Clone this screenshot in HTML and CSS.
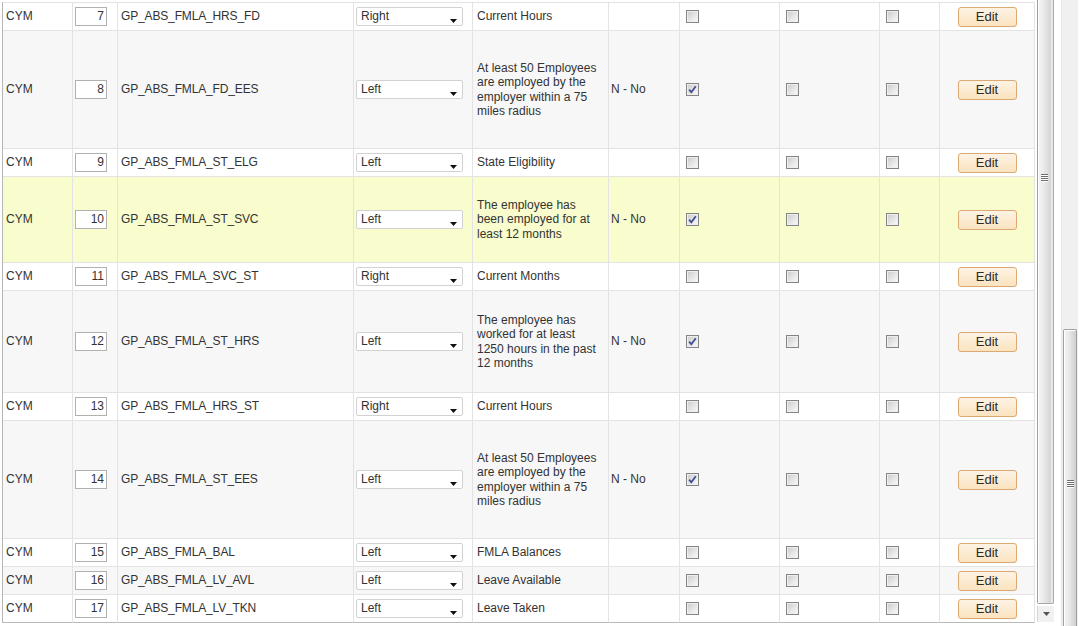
FILE: index.html
```html
<!DOCTYPE html>
<html>
<head>
<meta charset="utf-8">
<title>FMLA Grid</title>
<link rel="stylesheet" href="styles.css">
</head>
<body>
<div class="frame">
  <div class="grid-area">
    <div class="grid">
      <div class="row h28 bg-white">
        <div class="c c1">CYM</div>
        <div class="c c2"><span class="num">7</span></div>
        <div class="c c3">GP_ABS_FMLA_HRS_FD</div>
        <div class="c c4"><span class="sel">Right<svg class="arr" width="7" height="4" viewBox="0 0 7 4"><path d="M0 0H7L3.5 4Z" fill="#111"/></svg></span></div>
        <div class="c c5">Current Hours</div>
        <div class="c c6"></div>
        <div class="c c7"><span class="cb"></span></div>
        <div class="c c8"><span class="cb"></span></div>
        <div class="c c9"><span class="cb"></span></div>
        <div class="c c10"><span class="btn">Edit</span></div>
      </div>
      <div class="row h118 bg-gray">
        <div class="c c1">CYM</div>
        <div class="c c2"><span class="num">8</span></div>
        <div class="c c3">GP_ABS_FMLA_FD_EES</div>
        <div class="c c4"><span class="sel">Left<svg class="arr" width="7" height="4" viewBox="0 0 7 4"><path d="M0 0H7L3.5 4Z" fill="#111"/></svg></span></div>
        <div class="c c5">At least 50 Employees are employed by the employer within a 75 miles radius</div>
        <div class="c c6">N - No</div>
        <div class="c c7"><span class="cb on"><svg width="11" height="11" viewBox="0 0 11 11"><path d="M2.2 5.6L4.3 8.3L8.8 2.2" fill="none" stroke="#3f4f93" stroke-width="1.8"/></svg></span></div>
        <div class="c c8"><span class="cb"></span></div>
        <div class="c c9"><span class="cb"></span></div>
        <div class="c c10"><span class="btn">Edit</span></div>
      </div>
      <div class="row h28 bg-white">
        <div class="c c1">CYM</div>
        <div class="c c2"><span class="num">9</span></div>
        <div class="c c3">GP_ABS_FMLA_ST_ELG</div>
        <div class="c c4"><span class="sel">Left<svg class="arr" width="7" height="4" viewBox="0 0 7 4"><path d="M0 0H7L3.5 4Z" fill="#111"/></svg></span></div>
        <div class="c c5">State Eligibility</div>
        <div class="c c6"></div>
        <div class="c c7"><span class="cb"></span></div>
        <div class="c c8"><span class="cb"></span></div>
        <div class="c c9"><span class="cb"></span></div>
        <div class="c c10"><span class="btn">Edit</span></div>
      </div>
      <div class="row h86 bg-yellow">
        <div class="c c1">CYM</div>
        <div class="c c2"><span class="num">10</span></div>
        <div class="c c3">GP_ABS_FMLA_ST_SVC</div>
        <div class="c c4"><span class="sel">Left<svg class="arr" width="7" height="4" viewBox="0 0 7 4"><path d="M0 0H7L3.5 4Z" fill="#111"/></svg></span></div>
        <div class="c c5">The employee has been employed for at least 12 months</div>
        <div class="c c6">N - No</div>
        <div class="c c7"><span class="cb on"><svg width="11" height="11" viewBox="0 0 11 11"><path d="M2.2 5.6L4.3 8.3L8.8 2.2" fill="none" stroke="#3f4f93" stroke-width="1.8"/></svg></span></div>
        <div class="c c8"><span class="cb"></span></div>
        <div class="c c9"><span class="cb"></span></div>
        <div class="c c10"><span class="btn">Edit</span></div>
      </div>
      <div class="row h28 bg-white">
        <div class="c c1">CYM</div>
        <div class="c c2"><span class="num">11</span></div>
        <div class="c c3">GP_ABS_FMLA_SVC_ST</div>
        <div class="c c4"><span class="sel">Right<svg class="arr" width="7" height="4" viewBox="0 0 7 4"><path d="M0 0H7L3.5 4Z" fill="#111"/></svg></span></div>
        <div class="c c5">Current Months</div>
        <div class="c c6"></div>
        <div class="c c7"><span class="cb"></span></div>
        <div class="c c8"><span class="cb"></span></div>
        <div class="c c9"><span class="cb"></span></div>
        <div class="c c10"><span class="btn">Edit</span></div>
      </div>
      <div class="row h102 bg-gray">
        <div class="c c1">CYM</div>
        <div class="c c2"><span class="num">12</span></div>
        <div class="c c3">GP_ABS_FMLA_ST_HRS</div>
        <div class="c c4"><span class="sel">Left<svg class="arr" width="7" height="4" viewBox="0 0 7 4"><path d="M0 0H7L3.5 4Z" fill="#111"/></svg></span></div>
        <div class="c c5">The employee has worked for at least 1250 hours in the past 12 months</div>
        <div class="c c6">N - No</div>
        <div class="c c7"><span class="cb on"><svg width="11" height="11" viewBox="0 0 11 11"><path d="M2.2 5.6L4.3 8.3L8.8 2.2" fill="none" stroke="#3f4f93" stroke-width="1.8"/></svg></span></div>
        <div class="c c8"><span class="cb"></span></div>
        <div class="c c9"><span class="cb"></span></div>
        <div class="c c10"><span class="btn">Edit</span></div>
      </div>
      <div class="row h28 bg-white">
        <div class="c c1">CYM</div>
        <div class="c c2"><span class="num">13</span></div>
        <div class="c c3">GP_ABS_FMLA_HRS_ST</div>
        <div class="c c4"><span class="sel">Right<svg class="arr" width="7" height="4" viewBox="0 0 7 4"><path d="M0 0H7L3.5 4Z" fill="#111"/></svg></span></div>
        <div class="c c5">Current Hours</div>
        <div class="c c6"></div>
        <div class="c c7"><span class="cb"></span></div>
        <div class="c c8"><span class="cb"></span></div>
        <div class="c c9"><span class="cb"></span></div>
        <div class="c c10"><span class="btn">Edit</span></div>
      </div>
      <div class="row h118 bg-gray">
        <div class="c c1">CYM</div>
        <div class="c c2"><span class="num">14</span></div>
        <div class="c c3">GP_ABS_FMLA_ST_EES</div>
        <div class="c c4"><span class="sel">Left<svg class="arr" width="7" height="4" viewBox="0 0 7 4"><path d="M0 0H7L3.5 4Z" fill="#111"/></svg></span></div>
        <div class="c c5">At least 50 Employees are employed by the employer within a 75 miles radius</div>
        <div class="c c6">N - No</div>
        <div class="c c7"><span class="cb on"><svg width="11" height="11" viewBox="0 0 11 11"><path d="M2.2 5.6L4.3 8.3L8.8 2.2" fill="none" stroke="#3f4f93" stroke-width="1.8"/></svg></span></div>
        <div class="c c8"><span class="cb"></span></div>
        <div class="c c9"><span class="cb"></span></div>
        <div class="c c10"><span class="btn">Edit</span></div>
      </div>
      <div class="row h28 bg-white">
        <div class="c c1">CYM</div>
        <div class="c c2"><span class="num">15</span></div>
        <div class="c c3">GP_ABS_FMLA_BAL</div>
        <div class="c c4"><span class="sel">Left<svg class="arr" width="7" height="4" viewBox="0 0 7 4"><path d="M0 0H7L3.5 4Z" fill="#111"/></svg></span></div>
        <div class="c c5">FMLA Balances</div>
        <div class="c c6"></div>
        <div class="c c7"><span class="cb"></span></div>
        <div class="c c8"><span class="cb"></span></div>
        <div class="c c9"><span class="cb"></span></div>
        <div class="c c10"><span class="btn">Edit</span></div>
      </div>
      <div class="row h28 bg-gray">
        <div class="c c1">CYM</div>
        <div class="c c2"><span class="num">16</span></div>
        <div class="c c3">GP_ABS_FMLA_LV_AVL</div>
        <div class="c c4"><span class="sel">Left<svg class="arr" width="7" height="4" viewBox="0 0 7 4"><path d="M0 0H7L3.5 4Z" fill="#111"/></svg></span></div>
        <div class="c c5">Leave Available</div>
        <div class="c c6"></div>
        <div class="c c7"><span class="cb"></span></div>
        <div class="c c8"><span class="cb"></span></div>
        <div class="c c9"><span class="cb"></span></div>
        <div class="c c10"><span class="btn">Edit</span></div>
      </div>
      <div class="row h28 bg-white last">
        <div class="c c1">CYM</div>
        <div class="c c2"><span class="num">17</span></div>
        <div class="c c3">GP_ABS_FMLA_LV_TKN</div>
        <div class="c c4"><span class="sel">Left<svg class="arr" width="7" height="4" viewBox="0 0 7 4"><path d="M0 0H7L3.5 4Z" fill="#111"/></svg></span></div>
        <div class="c c5">Leave Taken</div>
        <div class="c c6"></div>
        <div class="c c7"><span class="cb"></span></div>
        <div class="c c8"><span class="cb"></span></div>
        <div class="c c9"><span class="cb"></span></div>
        <div class="c c10"><span class="btn">Edit</span></div>
      </div>
    </div>
  </div>
  <div class="sb-inner">
    <div class="sb-inner-thumb">
      <span class="grip grip-inner"><i></i><i></i><i></i><i></i></span>
    </div>
    <div class="sb-inner-down"><svg width="7" height="4" viewBox="0 0 7 4"><path d="M0 0H7L3.5 4Z" fill="#555"/></svg></div>
  </div>
  <div class="sb-gap"></div>
  <div class="sb-outer">
    <div class="sb-outer-track"></div>
    <div class="sb-outer-thumb">
      <span class="grip grip-outer"><i></i><i></i><i></i><i></i></span>
    </div>
  </div>
</div>
</body>
</html>
```

FILE: styles.css
```css
* { box-sizing: border-box; }
html, body { margin: 0; padding: 0; background: #fff; }
body {
  font-family: "Liberation Sans", Arial, sans-serif;
  font-size: 12px;
  color: #333;
  overflow: hidden;
}
.frame {
  display: flex;
  height: 626px;
  width: 1079px;
}
.grid-area {
  width: 1037px;
  padding: 2px 0 0 2px;
  flex: none;
}
.grid {
  width: 1033px;
  border-left: 1px solid #b6b6b6;
  border-top: 1px solid #e3e3e3;
}
.row {
  display: grid;
  grid-template-columns: 70px 45px 236px 119px 136px 71px 100px 100px 60px 95px;
}
.row.last .c { border-bottom-color: #b9b9b9; }
.h28 { height: 28px; }
.h86 { height: 86px; }
.h102 { height: 102px; }
.h118 { height: 118px; }
.bg-white { background: #fff; }
.bg-gray { background: #f7f7f7; }
.bg-yellow { background: #f9fccd; }
.c {
  display: flex;
  align-items: center;
  border-right: 1px solid #e3e3e3;
  border-bottom: 1px solid #e3e3e3;
  padding: 0 3px;
  line-height: 14.4px;
  min-width: 0;
}
.c3 { letter-spacing: -0.15px; }
.c2 { padding: 0 2px; }
.c4 { padding: 0 2px; }
.c5 { padding: 0 4px 0 4px; }
.c6 { padding: 0 2px; }
.c7, .c8, .c9 { padding: 0 0 0 6px; }
.c10 { justify-content: center; padding: 0; }

.num {
  display: block;
  width: 32px;
  height: 19px;
  border: 1px solid #b1b1b1;
  background: #fff;
  text-align: right;
  padding: 0 2px 0 0;
  line-height: 17px;
}
.sel {
  position: relative;
  display: block;
  width: 107px;
  height: 19px;
  border: 1px solid #d2d2d2;
  border-radius: 2px;
  background: #fff;
  padding-left: 4px;
  line-height: 16px;
}
.arr {
  position: absolute;
  right: 5px;
  top: 11px;
}
.cb {
  display: block;
  width: 13px;
  height: 13px;
  border: 1px solid #858585;
  background: linear-gradient(135deg, #c9c9c9 0%, #e4e4e4 50%, #fbfbfb 100%);
  box-shadow: inset 0 0 0 1px #eeeeee;
}
.cb svg { display: block; margin: 0; }
.btn {
  display: block;
  width: 59px;
  height: 20px;
  border: 1px solid #dca873;
  border-radius: 3px;
  background: linear-gradient(#fdf3e4, #fae3bf);
  text-align: center;
  font-size: 13px;
  line-height: 18px;
  color: #2b2b2b;
}

.sb-inner {
  width: 17px;
  flex: none;
  display: flex;
  flex-direction: column;
  height: 622px;
}
.sb-inner-thumb {
  flex: 1;
  border-left: 1px solid #9e9e9e;
  border-right: 1px solid #a8a8a8;
  border-bottom: 1px solid #a8a8a8;
  border-radius: 0 0 2px 2px;
  background: linear-gradient(to right, #f6f6f6 0%, #ebebeb 35%, #d9d9d9 75%, #cdcdcd 100%);
  box-shadow: inset 1px 0 0 #fff, inset -2px 0 0 #e9e9e9;
  position: relative;
  margin-bottom: 2px;
}
.grip {
  position: absolute;
  left: 3px;
  display: flex;
  flex-direction: column;
  gap: 1px;
}
.grip i {
  display: block;
  width: 7px;
  height: 1px;
  background: #6e6e6e;
  box-shadow: 0 1px 0 #fff;
}
.grip-inner { top: 174px; }
.sb-inner-down {
  height: 16px;
  display: flex;
  align-items: center;
  justify-content: center;
  background: #f1f1f1;
  border-left: 1px solid #d6d6d6;
}
.sb-gap { width: 7px; flex: none; }
.sb-outer {
  width: 17px;
  flex: none;
  display: flex;
  flex-direction: column;
  background: #f0f0f0;
  border-left: 1px solid #e8e8e8;
}
.sb-outer-track { height: 329px; flex: none; }
.sb-outer-thumb {
  flex: 1;
  position: relative;
  margin: 0 1px;
  border: 1px solid #a0a0a0;
  border-bottom: none;
  border-radius: 2px 2px 0 0;
  background: linear-gradient(to right, #f4f4f4 0%, #e9e9e9 40%, #d8d8d8 80%, #cdcdcd 100%);
  box-shadow: inset 1px 1px 0 #fff;
}
.grip-outer { top: 150px; left: 3px; }
```
